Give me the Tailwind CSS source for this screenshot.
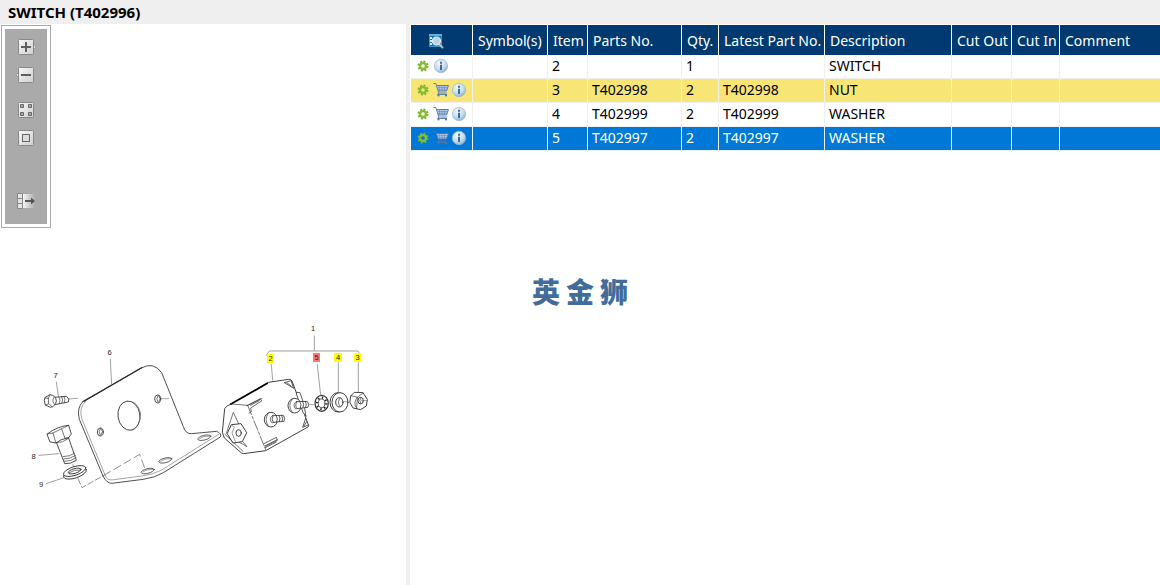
<!DOCTYPE html>
<html lang="en">
<head>
    <meta charset="UTF-8">
    <meta name="viewport" content="width=device-width, initial-scale=1.0">
    <title>SWITCH (T402996)</title>
    <script src="https://cdn.jsdelivr.net/npm/@tailwindcss/browser@4"></script>
</head>
<body class="relative min-h-screen flex flex-col bg-white text-black text-sm font-['Noto_Sans','Noto_Sans_CJK_SC',sans-serif]">
    <!-- Shared icons -->
    <svg class="absolute size-0" aria-hidden="true">
        <defs>
            <linearGradient id="key" x1="0" y1="0" x2="1" y2="1">
                <stop offset="0" stop-color="#f8f8f8"/>
                <stop offset="1" stop-color="#cfcfcf"/>
            </linearGradient>
            <linearGradient id="fade">
                <stop offset="0" stop-color="#f4f4f4"/>
                <stop offset="1" stop-color="#ababab"/>
            </linearGradient>
            <radialGradient id="ball" cx="0.4" cy="0.3" r="0.75">
                <stop offset="0" stop-color="#f4f9fd"/>
                <stop offset="0.6" stop-color="#c5dcec"/>
                <stop offset="1" stop-color="#86abc9"/>
            </radialGradient>
        </defs>
        <symbol id="gear" viewBox="0 0 16 16">
            <circle cx="8" cy="8" r="4.5" fill="none" stroke="#76b52b" stroke-width="2" stroke-dasharray="1.9 1.634"/>
            <circle cx="8" cy="8" r="3" fill="none" stroke="#84bd32" stroke-width="2.4"/>
        </symbol>
        <symbol id="cart" viewBox="0 0 16 16">
            <path d="M3.5 3.5h12l-2 5.500H5z" fill="#b4cbe6"/>
            <path d="M4.500 5.500h10M5 7.300h9M6.500 3.500v5.500M9 3.500v5.500M11.500 3.500v5.500" fill="none" stroke="#6f94c2" stroke-width="0.7"/>
            <path d="M0.5 1.500h2.300l3 9.500h8M3.500 3.500h12l-2 5.500H5.200M5.800 11l-1.300 1.500h9.500" fill="none" stroke="#4e77aa" stroke-width="0.9"/>
            <circle cx="5.500" cy="13.500" r="1.100" fill="#4e77aa"/>
            <circle cx="13" cy="13.500" r="1.100" fill="#4e77aa"/>
        </symbol>
        <symbol id="info" viewBox="0 0 16 16">
            <circle cx="8" cy="8" r="6.700" fill="url(#ball)" stroke="#9bb9d2" stroke-width="0.7"/>
            <path d="M7 3.700h2v2H7zM7 6.800h2v5.200H7z" fill="#386b9b"/>
        </symbol>
    </svg>

    <!-- Title -->
    <header class="h-6 px-2 bg-[#efefef]">
        <h1 class="font-bold text-[15px] leading-6">SWITCH (T402996)</h1>
    </header>

    <main class="flex flex-1">
        <!-- Illustration -->
        <section class="w-[35%] shrink-0">
            <div class="mt-px ml-px w-[50px] border border-[#aaa] p-[3px]">
                <div class="flex flex-col items-center bg-[#aaa] pt-[10px] pb-[15px]">
                    <button type="button" aria-label="Zoom in" class="h-4">
                        <svg class="w-5 h-4" viewBox="-2 0 20 16">
                            <path d="M15 5l3 3-3 3z" fill="#ddd" stroke="#888" stroke-width="0.6"/>
                            <rect x="0.5" y="0.5" width="15" height="15" rx="1" fill="url(#key)" stroke="#888"/>
                            <path d="M8 3v10M3 8h10" stroke="#606060" stroke-width="2"/>
                        </svg>
                    </button>
                    <button type="button" aria-label="Zoom out" class="h-4 mt-3">
                        <svg class="w-5 h-4" viewBox="-2 0 20 16">
                            <path d="M1 5l-3 3 3 3z" fill="#ddd" stroke="#888" stroke-width="0.6"/>
                            <rect x="0.5" y="0.5" width="15" height="15" rx="1" fill="url(#key)" stroke="#888"/>
                            <path d="M3 8h10" stroke="#606060" stroke-width="2"/>
                        </svg>
                    </button>
                    <button type="button" aria-label="Fit to window" class="h-4 mt-[19px]">
                        <svg class="w-5 h-4" viewBox="-2 0 20 16">
                            <rect x="0.5" y="0.5" width="15" height="15" rx="1" fill="url(#key)" stroke="#888"/>
                            <path d="M2.500 2.500h3v3h-3zM10.500 2.500h3v3h-3zM2.500 10.500h3v3h-3zM10.500 10.500h3v3h-3z" fill="#aaa" stroke="#666"/>
                        </svg>
                    </button>
                    <button type="button" aria-label="Actual size" class="h-4 mt-3">
                        <svg class="w-5 h-4" viewBox="-2 0 20 16">
                            <rect x="0.5" y="0.5" width="15" height="15" rx="1" fill="url(#key)" stroke="#888"/>
                            <rect x="4.500" y="4.500" width="7" height="7" fill="#ddd" stroke="#666"/>
                        </svg>
                    </button>
                    <button type="button" aria-label="Hide list" class="h-4 mt-[47px]">
                        <svg class="w-5 h-4" viewBox="-2 0 20 16">
                            <path d="M5 1h12v14H5z" fill="url(#fade)"/>
                            <path d="M-0.500 0.500h5v15h-5zM-0.500 5.500h5M-0.500 10.500h5" fill="#e4e4e4" stroke="#888"/>
                            <path d="M7 7h6V4.500l4 3.500-4 3.500V9H7z" fill="#555"/>
                        </svg>
                    </button>
                </div>
            </div>

            <svg class="w-full mt-[72px]" viewBox="0 300 406 220" fill="none" stroke="#333" stroke-linejoin="round" stroke-linecap="round" font-family="Liberation Sans, sans-serif" font-size="7.500">
                <!-- Bracket, bolts and washer -->
                <g transform="translate(20 340) scale(0.33333)" stroke-width="2.600">
                    <path d="M189 184L362 85Q400 63 425 98L490 260Q497 282 514 281L590 274Q606 281 601 291L430 398Q405 413 370 418L275 430Q260 430 249 408L178 238Q169 204 189 184z" fill="#fff"/>
                    <path d="M197 183Q175 205 186 238L258 412Q263 421 275 420L365 408Q400 404 425 390L596 283" stroke="#777" stroke-width="2"/>
                    <path d="M192 184L365 83" stroke="#222" stroke-width="3.500"/>
                    <ellipse cx="327" cy="227" rx="33" ry="44" transform="rotate(-8 327 227)"/>
                    <path d="M322 184Q352 181 361 217Q364 254 337 271" stroke="#666" stroke-width="2"/>
                    <ellipse cx="241" cy="276" rx="9" ry="12"/><path d="M241 266q-8 9 0 20m3-20q7 9 0 18" stroke-width="2"/>
                    <ellipse cx="413" cy="177" rx="9" ry="12"/><path d="M414 167q-8 9 0 20m3-20q7 9 0 18" stroke-width="2"/>
                    <path d="M424 176h22M142 177l32-2" stroke="#777" stroke-width="2"/>
                    <g stroke-width="2.200">
                        <ellipse cx="383" cy="393" rx="20" ry="7" transform="rotate(-14 383 393)"/>
                        <path d="M369 396q12-10 30-7" stroke="#777"/>
                        <ellipse cx="436" cy="361" rx="20" ry="7" transform="rotate(-14 436 361)"/>
                        <path d="M422 364q12-10 30-7" stroke="#777"/>
                        <ellipse cx="553" cy="293" rx="20" ry="7" transform="rotate(-14 553 293)"/>
                        <path d="M539 296q12-10 30-7" stroke="#777"/>
                    </g>
                    <path d="M159 374l4 18M174 416l12 27 64-36" stroke="#555" stroke-width="2" stroke-dasharray="18 7"/>
                    <path d="M250 407L359 343l16 44" stroke="#555" stroke-width="2" stroke-dasharray="24 12"/>
                    <!-- screw 7 -->
                    <path d="M102 172l38-3q10 8 5 17l-40 8" fill="#fff"/>
                    <path d="M76 172l14-8q18 3 19 19-2 16-18 19l-15-7-3-12z" fill="#fff"/>
                    <path d="M76 174l9 1 5-11M85 175l1 16-10 4M86 191l10 9M102 172q-9 12 3 22M117 171q6 9 1 20M125 170q6 9 1 19M132 170q6 9 1 18" stroke-width="2"/>
                    <!-- bolt 8 -->
                    <path d="M109 307l25 64q17 2 35-10l-23-67" fill="#fff"/>
                    <path d="M82 282q29-23 64-26l8 26-8 11q-27 5-38 16l-17-3z" fill="#fff"/>
                    <path d="M82 282l17-3 26-13 21-10M99 279l8 28M125 267l10 28M135 295l11-2M129 350q20 0 34-10M131 357q20 0 35-10M133 364q20 0 35-10M108 308q20 2 38-13" stroke-width="2"/>
                    <!-- washer 9 -->
                    <ellipse cx="165" cy="400" rx="36" ry="14" transform="rotate(-18 165 400)" fill="#fff"/>
                    <ellipse cx="164" cy="393" rx="35" ry="13" transform="rotate(-18 164 393)" fill="#fff"/>
                    <ellipse cx="164" cy="393" rx="20" ry="7" transform="rotate(-16 164 393)"/>
                    <path d="M148 398q14-10 33-8" stroke-width="2"/>
                    <path d="M271 58l4 75M109 126l6 41M57 346l60-5M78 431l54-18" stroke="#888" stroke-width="2.400"/>
                </g>
                <!-- Switch body -->
                <g transform="translate(215 320) scale(0.33333)" stroke-width="2.800">
                    <path d="M48 252L160 187 221 178Q228 177 231 183L281 317 279 321 152 392 85 401Q79 400 75 395L28 354 22 337 29 266Q32 258 48 252z" fill="#fff"/>
                    <path d="M48 252L157 190" stroke="#000" stroke-width="5"/>
                    <path d="M48 252L98 256M98 256L141 235M34 340L55 277 76 322M30 343L84 394M76 356l20 24-28-16" stroke-width="2"/>
                    <path d="M98 256L152 389" stroke-width="2" stroke-dasharray="30 6 8 6"/>
                    <path d="M96 257l40-21 4 7-33 21 2 11-7 4M106 256l27-14M147 371l37-19 3 9-35 18M149 378l38-19M151 383l33-17" stroke-width="2.200"/>
                    <path d="M208 188l20-6 8 23-28-17M216 188l12 10M272 295l-9 27 17-7M267 318l8-13" stroke-width="2.400"/>
                    <path d="M245 217l10 1 12 35 6 36-9-12-19-53z" fill="#fff" stroke-width="2.400"/>
                    <path d="M37 340l12-26 29-3 17 27-13 27-27 4z" fill="#fff"/>
                    <path d="M49 314l9 8-7 17 10 25" stroke="#666" stroke-width="2"/>
                    <ellipse cx="71" cy="339" rx="8" ry="10"/>
                    <!-- studs -->
                    <ellipse cx="168" cy="299" rx="20" ry="22" fill="#fff"/>
                    <path d="M160 280q-14 18 0 38M172 287q-12 10-1 22l8-3" stroke-width="2"/>
                    <path d="M174 287l31-1q7 8 2 18l-32 3q-7-8-1-20zM184 287q6 9 1 19M192 286q6 9 1 19M200 286q6 9 1 18" fill="#fff" stroke-width="2.400"/>
                    <ellipse cx="239" cy="257" rx="20" ry="22" fill="#fff"/>
                    <path d="M231 238q-14 18 0 38M243 245q-12 10-1 22l8-3" stroke-width="2"/>
                    <path d="M245 245l32-1q7 8 2 18l-33 4q-7-8-1-21zM255 245q6 9 1 19M263 244q6 9 1 19M271 244q6 9 1 18" fill="#fff" stroke-width="2.400"/>
                    <!-- lock washer 5 -->
                    <ellipse cx="320" cy="250" rx="20" ry="24" fill="#fff" stroke-width="3.500"/>
                    <ellipse cx="320" cy="250" rx="14" ry="17" stroke="#222" stroke-width="7" stroke-dasharray="4 8" stroke-linecap="butt"/>
                    <ellipse cx="320" cy="250" rx="10" ry="13" stroke-width="2.400"/>
                    <!-- washer 4 -->
                    <ellipse cx="369" cy="247" rx="24" ry="29" fill="#fff"/>
                    <ellipse cx="375" cy="247" rx="24" ry="29" fill="#fff"/>
                    <ellipse cx="373" cy="247" rx="11" ry="14"/><path d="M376 234q-12 12 0 26" stroke-width="2"/>
                    <!-- nut 3 -->
                    <path d="M408 227l10-10 26 1 13 20-3 20-17 11-23-5-9-16z" fill="#fff"/>
                    <path d="M408 227l19 5 17-13M427 232l-2 34M427 232q-14 15-2 34" stroke-width="2"/>
                    <ellipse cx="437" cy="242" rx="8" ry="10"/><path d="M438 233q-8 9 0 18" stroke-width="2"/>
                    <path d="M283 254h14M327 251h14M383 245h15M440 242h17" stroke="#777" stroke-width="2"/>
                    <path d="M298 48v43M154 106l9-13h266l8 12M169 134l4 47M307 134l10 92M370 128v90M430 128v88" stroke="#888" stroke-width="2.400"/>
                </g>
                <!-- Callouts -->
                <g stroke="none">
                    <path d="M267 354h7v9h-7zM334 353h8v9h-8zM354 353h7v9h-7z" fill="#ff0"/>
                    <path d="M313 353h7v9h-7z" fill="#f77"/>
                </g>
                <g fill="#222" stroke="none" text-anchor="middle">
                    <text x="313" y="331">1</text>
                    <text x="270.500" y="361">2</text>
                    <text x="316.500" y="360">5</text>
                    <text x="338" y="360">4</text>
                    <text x="357.500" y="360">3</text>
                    <text x="109.500" y="355">6</text>
                    <text x="55.500" y="378">7</text>
                    <text x="33.500" y="459">8</text>
                    <text x="41" y="487">9</text>
                </g>
            </svg>
        </section>

        <!-- Parts list -->
        <section class="flex-1 min-w-0 border-l-4 border-[#efefef] pt-px pl-px">
            <table class="w-full table-fixed border-separate border-spacing-0 text-left whitespace-nowrap">
                <colgroup>
                    <col class="w-[62px]">
                    <col class="w-[75px]">
                    <col class="w-[40px]">
                    <col class="w-[94px]">
                    <col class="w-[37px]">
                    <col class="w-[106px]">
                    <col class="w-[127px]">
                    <col class="w-[60px]">
                    <col class="w-[48px]">
                    <col>
                </colgroup>
                <thead class="bg-[#003a70] text-white [&_th]:h-[30px] [&_th]:p-0 [&_th]:pt-px [&_th]:pl-[5px] [&_th]:leading-5 [&_th]:font-normal [&_th]:border-r [&_th]:border-white [&_th:last-child]:border-r-0">
                    <tr>
                        <th>
                            <button type="button" aria-label="Search parts" class="block ml-3 size-4">
                                <svg class="size-4" viewBox="0 0 16 16">
                                    <path d="M1.500 1.500h12v12h-12z" fill="#1e6fa5" stroke="#3a9bd0"/>
                                    <path d="M1 1h13v2H1z" fill="#58b4df"/>
                                    <path d="M2 4h2v2H2zM2 7h2v2H2zM2 10h2v2H2z" fill="#d5ebf7"/>
                                    <path d="M11 11l4 4" stroke="#b7bcc2" stroke-width="2"/>
                                    <circle cx="8.500" cy="8" r="4" fill="#b9d3e3" stroke="#e8eef2" stroke-width="1.200"/>
                                </svg>
                            </button>
                        </th>
                        <th>Symbol(s)</th>
                        <th>Item</th>
                        <th>Parts No.</th>
                        <th>Qty.</th>
                        <th>Latest Part No.</th>
                        <th>Description</th>
                        <th>Cut Out</th>
                        <th>Cut In</th>
                        <th>Comment</th>
                    </tr>
                </thead>
                <tbody class="[&_td]:h-6 [&_td]:p-0 [&_td]:pl-1 [&_td]:align-top [&_td]:leading-[22px] [&_td]:border-r [&_td]:border-b [&_td]:border-[#efefef] [&_td:last-child]:border-r-0">
                    <tr>
                        <td>
                            <div class="flex items-center gap-0.5 h-[22px]">
                                <button type="button" aria-label="Options"><svg class="size-4"><use href="#gear"/></svg></button>
                                <button type="button" aria-label="Information"><svg class="size-4"><use href="#info"/></svg></button>
                            </div>
                        </td>
                        <td></td>
                        <td>2</td>
                        <td></td>
                        <td>1</td>
                        <td></td>
                        <td>SWITCH</td>
                        <td></td>
                        <td></td>
                        <td></td>
                    </tr>
                    <tr class="bg-[#f7e675]">
                        <td>
                            <div class="flex items-center gap-0.5 h-[22px]">
                                <button type="button" aria-label="Options"><svg class="size-4"><use href="#gear"/></svg></button>
                                <button type="button" aria-label="Add to cart"><svg class="size-4"><use href="#cart"/></svg></button>
                                <button type="button" aria-label="Information"><svg class="size-4"><use href="#info"/></svg></button>
                            </div>
                        </td>
                        <td></td>
                        <td>3</td>
                        <td>T402998</td>
                        <td>2</td>
                        <td>T402998</td>
                        <td>NUT</td>
                        <td></td>
                        <td></td>
                        <td></td>
                    </tr>
                    <tr>
                        <td>
                            <div class="flex items-center gap-0.5 h-[22px]">
                                <button type="button" aria-label="Options"><svg class="size-4"><use href="#gear"/></svg></button>
                                <button type="button" aria-label="Add to cart"><svg class="size-4"><use href="#cart"/></svg></button>
                                <button type="button" aria-label="Information"><svg class="size-4"><use href="#info"/></svg></button>
                            </div>
                        </td>
                        <td></td>
                        <td>4</td>
                        <td>T402999</td>
                        <td>2</td>
                        <td>T402999</td>
                        <td>WASHER</td>
                        <td></td>
                        <td></td>
                        <td></td>
                    </tr>
                    <tr class="bg-[#0078d7] text-white">
                        <td>
                            <div class="flex items-center gap-0.5 h-[22px]">
                                <button type="button" aria-label="Options"><svg class="size-4"><use href="#gear"/></svg></button>
                                <button type="button" aria-label="Add to cart"><svg class="size-4"><use href="#cart"/></svg></button>
                                <button type="button" aria-label="Information"><svg class="size-4"><use href="#info"/></svg></button>
                            </div>
                        </td>
                        <td></td>
                        <td>5</td>
                        <td>T402997</td>
                        <td>2</td>
                        <td>T402997</td>
                        <td>WASHER</td>
                        <td></td>
                        <td></td>
                        <td></td>
                    </tr>
                </tbody>
            </table>
        </section>
    </main>

    <!-- Watermark -->
    <div class="absolute inset-0 flex items-center justify-center gap-[6px] pb-1 pointer-events-none text-[28px] leading-none font-black text-[#426d9b] font-['Noto_Sans_CJK_SC',sans-serif]" lang="zh">
        <span>英</span><span>金</span><span>狮</span>
    </div>
</body>
</html>
